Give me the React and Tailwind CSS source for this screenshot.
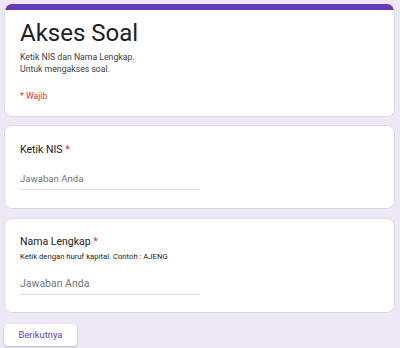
export default function App() {
  const font = { fontFamily: 'Roboto, "Noto Sans", Arial, sans-serif' };
  return (
    <div className="w-[400px] h-[348px] bg-[#ede7f6] overflow-hidden pt-[4px] pl-[4px] pr-[5px]" style={font}>
      <div className="flex flex-col">
        {/* Card 1 */}
        <div className="bg-white rounded-[8px] border border-[#dadce0] border-t-0 overflow-hidden h-[113px]">
          <div className="h-[6px] bg-[#673ab7]" />
          <div className="px-[15px] pt-[9px]">
            <div className="text-[24px] leading-[28px] text-[#202124]">Akses Soal</div>
            <div className="mt-[4px] text-[8.7px] leading-[12px] text-[#3c4043]">
              Ketik NIS dan Nama Lengkap.
              <br />
              Untuk mengakses soal.
            </div>
            <div className="mt-[15px] text-[8.7px] leading-[12px] text-[#d93025]">* Wajib</div>
          </div>
        </div>
        {/* Card 2 */}
        <div className="mt-[8px] bg-white rounded-[8px] border border-[#dadce0] h-[84px] px-[15px] pt-[16px]">
          <div className="text-[10.5px] leading-[16px] text-[#202124]">
            Ketik NIS <span className="text-[#d93025]">*</span>
          </div>
          <div className="mt-[14px] w-[180px] border-b border-[#e0e0e0] pb-[3px] text-[9.6px] leading-[14px] text-[#70757a]">
            Jawaban Anda
          </div>
        </div>
        {/* Card 3 */}
        <div className="mt-[9px] bg-white rounded-[8px] border border-[#dadce0] h-[95px] px-[15px] pt-[15px]">
          <div className="text-[10.5px] leading-[16px] text-[#202124]">
            Nama Lengkap <span className="text-[#d93025]">*</span>
          </div>
          <div className="mt-[1px] text-[7.7px] leading-[12px] text-[#202124]">
            Ketik dengan huruf kapital. Contoh : AJENG
          </div>
          <div className="mt-[14px] w-[180px] border-b border-[#e0e0e0] pb-[3px] text-[10.5px] leading-[14px] text-[#70757a]">
            Jawaban Anda
          </div>
        </div>
        {/* Button */}
        <div className="mt-[8px]">
          <button className="w-[73px] h-[22px] bg-white rounded-[4px] shadow-[0_1px_2px_rgba(60,64,67,0.3)] text-[9.4px] text-[#673ab7]">
            Berikutnya
          </button>
        </div>
      </div>
    </div>
  );
}
